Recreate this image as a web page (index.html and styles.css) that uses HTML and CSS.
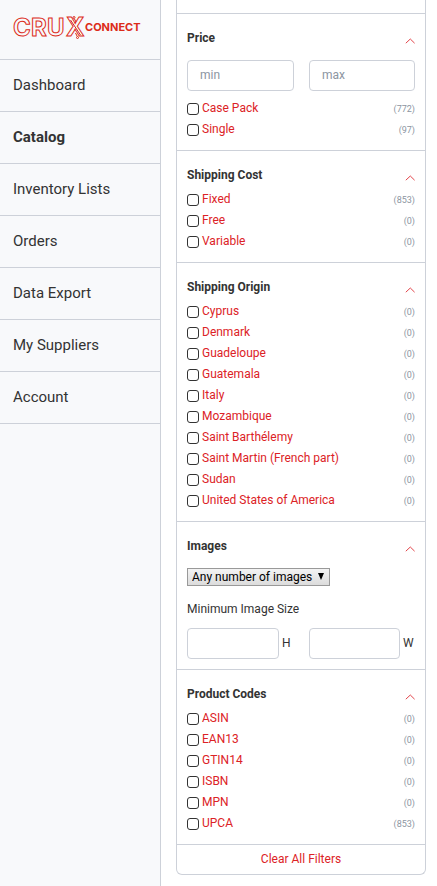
FILE: index.html
```html
<!DOCTYPE html>
<html lang="en">
<head>
<meta charset="utf-8">
<meta name="viewport" content="width=device-width, initial-scale=1">
<title>Catalog - Crux Connect</title>
<link rel="stylesheet" href="styles.css">
</head>
<body>
<svg class="defs" width="0" height="0" aria-hidden="true">
  <symbol id="chevron" viewBox="0 0 10 6"><path d="M.8 5.200 5.300 1l4.300 4.200" fill="none" stroke="currentColor"/></symbol>
</svg>
<div class="app">
  <aside class="sidebar">
    <a class="brand" href="#">
      <svg width="135" height="40" viewBox="0 0 135 40" role="img" aria-label="Crux Connect">
        <g class="brand-outline">
          <text x="0" y="28" font-size="24">C</text>
          <text x="18" y="28" font-size="24">R</text>
          <text x="34" y="28" font-size="24">U</text>
          <text x="53" y="28" font-size="25">X</text>
          <circle cx="61" cy="9.500" r="1"/>
          <circle cx="64.500" cy="29.500" r="1"/>
          <path d="M57.500 12l10 15M61.500 11l1.500 3M64 28l-1.500-3"/>
        </g>
        <text class="brand-word" x="72" y="23" font-size="11">CONNECT</text>
      </svg>
    </a>
    <nav class="nav">
      <a href="#">Dashboard</a>
      <a class="active" href="#">Catalog</a>
      <a href="#">Inventory Lists</a>
      <a href="#">Orders</a>
      <a href="#">Data Export</a>
      <a href="#">My Suppliers</a>
      <a href="#">Account</a>
    </nav>
  </aside>
  <main class="content">
    <form class="filters">
      <section class="group">
        <div class="group-head"><h2>Price</h2><button type="button" aria-label="Collapse Price"><svg><use href="#chevron"/></svg></button></div>
        <div class="pair price">
          <input class="field" type="text" placeholder="min" aria-label="Minimum price">
          <input class="field" type="text" placeholder="max" aria-label="Maximum price">
        </div>
        <ul>
          <li><label><input type="checkbox">Case Pack</label><span>(772)</span></li>
          <li><label><input type="checkbox">Single</label><span>(97)</span></li>
        </ul>
      </section>
      <section class="group">
        <div class="group-head"><h2>Shipping Cost</h2><button type="button" aria-label="Collapse Shipping Cost"><svg><use href="#chevron"/></svg></button></div>
        <ul>
          <li><label><input type="checkbox">Fixed</label><span>(853)</span></li>
          <li><label><input type="checkbox">Free</label><span>(0)</span></li>
          <li><label><input type="checkbox">Variable</label><span>(0)</span></li>
        </ul>
      </section>
      <section class="group">
        <div class="group-head"><h2>Shipping Origin</h2><button type="button" aria-label="Collapse Shipping Origin"><svg><use href="#chevron"/></svg></button></div>
        <ul>
          <li><label><input type="checkbox">Cyprus</label><span>(0)</span></li>
          <li><label><input type="checkbox">Denmark</label><span>(0)</span></li>
          <li><label><input type="checkbox">Guadeloupe</label><span>(0)</span></li>
          <li><label><input type="checkbox">Guatemala</label><span>(0)</span></li>
          <li><label><input type="checkbox">Italy</label><span>(0)</span></li>
          <li><label><input type="checkbox">Mozambique</label><span>(0)</span></li>
          <li><label><input type="checkbox">Saint Barthélemy</label><span>(0)</span></li>
          <li><label><input type="checkbox">Saint Martin (French part)</label><span>(0)</span></li>
          <li><label><input type="checkbox">Sudan</label><span>(0)</span></li>
          <li><label><input type="checkbox">United States of America</label><span>(0)</span></li>
        </ul>
      </section>
      <section class="group">
        <div class="group-head"><h2>Images</h2><button type="button" aria-label="Collapse Images"><svg><use href="#chevron"/></svg></button></div>
        <div class="select-wrap">
          <select aria-label="Number of images"><option>Any number of images</option></select>
          <svg class="arrow" width="6" height="7" viewBox="0 0 6 7" aria-hidden="true"><path d="M0 0h6L3 7z"/></svg>
        </div>
        <p class="hint">Minimum Image Size</p>
        <div class="pair">
          <label class="size"><input class="field" type="text"><span>H</span></label>
          <label class="size"><input class="field" type="text"><span>W</span></label>
        </div>
      </section>
      <section class="group">
        <div class="group-head"><h2>Product Codes</h2><button type="button" aria-label="Collapse Product Codes"><svg><use href="#chevron"/></svg></button></div>
        <ul>
          <li><label><input type="checkbox">ASIN</label><span>(0)</span></li>
          <li><label><input type="checkbox">EAN13</label><span>(0)</span></li>
          <li><label><input type="checkbox">GTIN14</label><span>(0)</span></li>
          <li><label><input type="checkbox">ISBN</label><span>(0)</span></li>
          <li><label><input type="checkbox">MPN</label><span>(0)</span></li>
          <li><label><input type="checkbox">UPCA</label><span>(853)</span></li>
        </ul>
      </section>
      <a class="clear" href="#">Clear All Filters</a>
    </form>
  </main>
</div>
</body>
</html>
```
FILE: styles.css
```css
* { box-sizing: border-box; }

body {
  margin: 0;
  background: #fff;
  color: #333;
  font: 12px/21px Roboto, sans-serif;
}

a { color: inherit; text-decoration: none; }

.defs { position: absolute; }

.app { display: flex; min-height: 100vh; }

.sidebar {
  flex: 0 0 161px;
  background: #f8f9fb;
  border-right: 1px solid #cdd1d9;
}

.brand {
  display: flex;
  height: 60px;
  padding: 8px 0 0 13px;
  border-bottom: 1px solid #cdd1d9;
}

.brand-outline {
  fill: none;
  stroke: #dc2b19;
  stroke-width: 1;
  font-family: Inter, sans-serif;
  font-weight: 700;
}

.brand-word {
  fill: #dc2b19;
  font-family: Inter, sans-serif;
  font-weight: 700;
}

.nav a {
  display: block;
  height: 52px;
  padding-left: 13px;
  border-bottom: 1px solid #cdd1d9;
  font-size: 15px;
  line-height: 51px;
}

.nav .active { font-weight: 700; }

.content { flex: 1; padding: 0 11px 11px 15px; }

.filters {
  padding-top: 13px;
  border: 1px solid #cdd1d9;
  border-top: 0;
  border-radius: 0 0 6px 6px;
}

.group {
  padding: 14px 10px 10px;
  border-top: 1px solid #cdd1d9;
}

.group-head {
  display: flex;
  justify-content: space-between;
  margin-bottom: 3px;
}

.group-head h2 { margin: 0; font-size: 12px; font-weight: 700; }

.group-head button {
  display: flex;
  padding: 10px 0 0;
  border: 0;
  background: none;
  color: #e2444a;
}

.group-head svg { width: 10px; height: 6px; }

ul { margin: 0; padding: 0; list-style: none; }

li { display: flex; justify-content: space-between; height: 21px; }

li label { display: flex; color: #dc2226; }

li input {
  appearance: none;
  width: 12px;
  height: 12px;
  margin: 5px 3px 0 0;
  border: 1px solid #333;
  border-radius: 3px;
  background: #fff;
}

li span { color: #8c95a1; font-size: 9px; line-height: 22px; }

.pair {
  display: grid;
  grid-template-columns: 107px 1fr;
  gap: 15px;
}

.price { margin: 11px 0 7px; }

.field {
  width: 100%;
  min-width: 0;
  height: 31px;
  padding: 0 12px 2px;
  border: 1px solid #cdd1d9;
  border-radius: 4px;
  background: #fff;
  color: #333;
  font: 12px Roboto, sans-serif;
}

.field::placeholder { color: #8c95a1; opacity: 1; }

.select-wrap {
  position: relative;
  display: flex;
  width: 143px;
  margin-top: 11px;
}

select {
  appearance: none;
  width: 100%;
  height: 18px;
  padding: 0 4px;
  border: 1px solid #999;
  border-radius: 0;
  background: linear-gradient(#f4f4f4, #dcdcdc);
  color: #000;
  font: 12px Roboto, sans-serif;
}

.arrow { position: absolute; top: 5px; right: 6px; pointer-events: none; }

.hint { margin: 13px 0 8px; }

.size { display: flex; align-items: center; gap: 3px; }

.size span { flex: 0 0 12px; }

.clear { display: block; padding: 4px 0; border-top: 1px solid #cdd1d9; color: #dc2226; text-align: center; }
```
